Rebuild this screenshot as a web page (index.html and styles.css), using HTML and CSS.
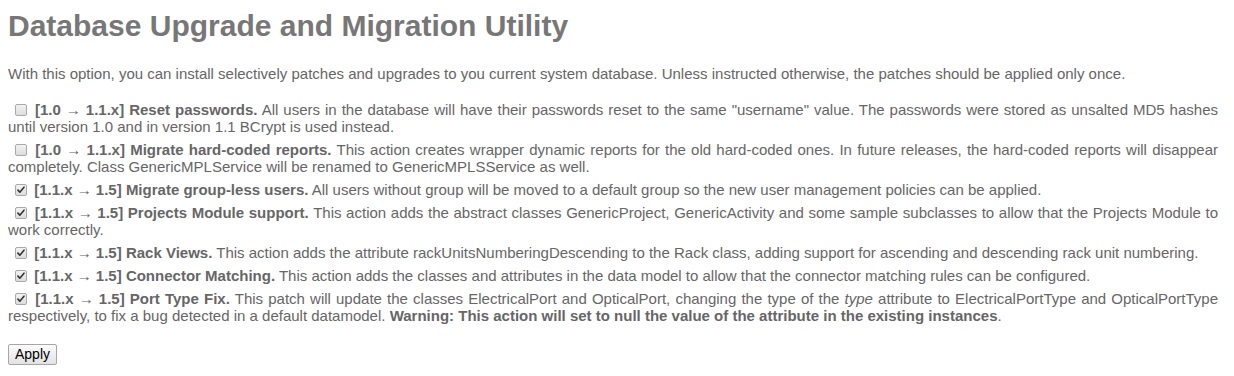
FILE: index.html
```html
<!DOCTYPE html>
<html>
<head>
<meta charset="utf-8">
<link rel="stylesheet" href="styles.css">
</head>
<body>
<h1 class="title">Database Upgrade and Migration Utility</h1>
<p class="intro">With this option, you can install selectively patches and upgrades to you current system database. Unless instructed otherwise, the patches should be applied only once.</p>
<div class="patches">
  <div class="patch"><input type="checkbox" class="chk"> <b>[1.0 → 1.1.x] Reset passwords.</b> All users in the database will have their passwords reset to the same "username" value. The passwords were stored as unsalted MD5 hashes until version 1.0 and in version 1.1 BCrypt is used instead.</div>
  <div class="patch"><input type="checkbox" class="chk"> <b>[1.0 → 1.1.x] Migrate hard-coded reports.</b> This action creates wrapper dynamic reports for the old hard-coded ones. In future releases, the hard-coded reports will disappear completely. Class GenericMPLService will be renamed to GenericMPLSService as well.</div>
  <div class="patch"><input type="checkbox" class="chk" checked> <b>[1.1.x → 1.5] Migrate group-less users.</b> All users without group will be moved to a default group so the new user management policies can be applied.</div>
  <div class="patch"><input type="checkbox" class="chk" checked> <b>[1.1.x → 1.5] Projects Module support.</b> This action adds the abstract classes GenericProject, GenericActivity and some sample subclasses to allow that the Projects Module to work correctly.</div>
  <div class="patch"><input type="checkbox" class="chk" checked> <b>[1.1.x → 1.5] Rack Views.</b> This action adds the attribute rackUnitsNumberingDescending to the Rack class, adding support for ascending and descending rack unit numbering.</div>
  <div class="patch"><input type="checkbox" class="chk" checked> <b>[1.1.x → 1.5] Connector Matching.</b> This action adds the classes and attributes in the data model to allow that the connector matching rules can be configured.</div>
  <div class="patch"><input type="checkbox" class="chk" checked> <b>[1.1.x → 1.5] Port Type Fix.</b> This patch will update the classes ElectricalPort and OpticalPort, changing the type of the <i>type</i> attribute to ElectricalPortType and OpticalPortType respectively, to fix a bug detected in a default datamodel. <b>Warning: This action will set to null the value of the attribute in the existing instances</b>.</div>
</div>
<button class="apply">Apply</button>
</body>
</html>
```
FILE: styles.css
```css
body {
  margin: 8px;
  font-family: "Liberation Sans", Arial, sans-serif;
  font-size: 15px;
  color: #666;
  background: #fff;
}
.title {
  font-size: 30px;
  font-weight: bold;
  color: #777;
  margin: 0;
  line-height: 36px;
}
.intro {
  margin: 21px 0 18px 0;
  line-height: 18px;
}
.patches {
  display: flex;
  flex-direction: column;
  gap: 6px;
  padding-right: 8px;
}
.patch {
  text-align: justify;
  line-height: 17px;
}
.chk {
  -webkit-appearance: none;
  appearance: none;
  display: inline-block;
  margin: 0 3px 0 7px;
  width: 12px;
  height: 12px;
  vertical-align: -1px;
  border: 1px solid #a9a9a9;
  border-radius: 2px;
  background: linear-gradient(#f2f2f2, #dcdcdc);
  box-sizing: border-box;
}
.chk:checked {
  background:
    url("data:image/svg+xml;utf8,<svg xmlns='http://www.w3.org/2000/svg' width='12' height='12' viewBox='0 0 12 12'><path d='M2.3 6.2 L4.6 8.6 L9.6 2.6' fill='none' stroke='%23333' stroke-width='1.9' stroke-linecap='round' stroke-linejoin='round'/></svg>") center/10px 10px no-repeat,
    linear-gradient(#f2f2f2, #dcdcdc);
}
.apply {
  margin-top: 20px;
  font-family: "Liberation Sans", Arial, sans-serif;
  font-size: 14px;
  color: #000;
  padding: 1px 6px;
  height: 21px;
  line-height: 17px;
  border: 1px solid #a6a6a6;
  border-radius: 2px;
  background: linear-gradient(#fcfcfc, #e2e2e2);
}
```
